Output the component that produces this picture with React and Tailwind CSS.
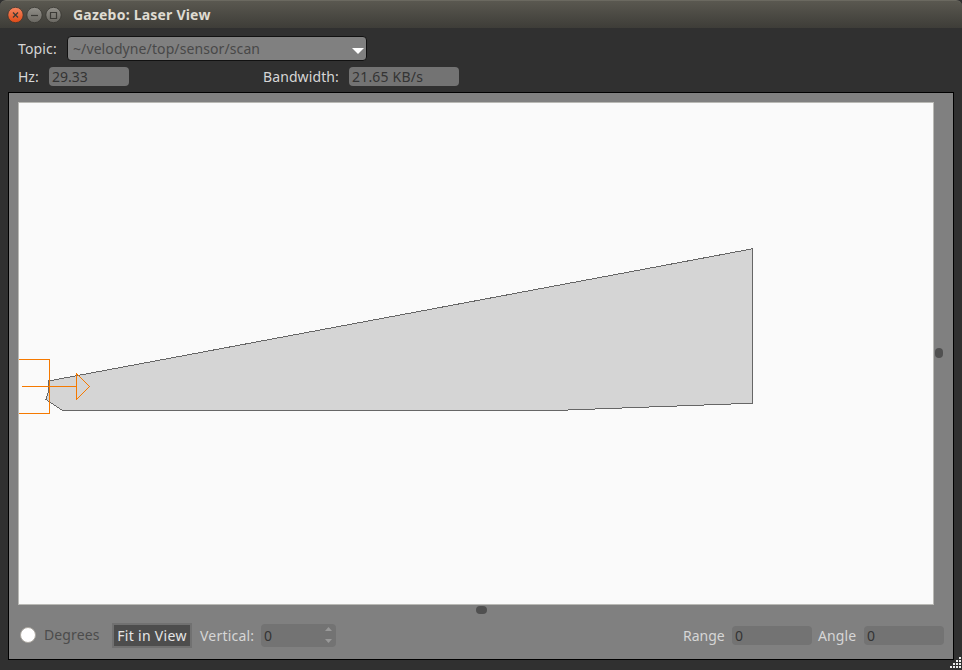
import React from "react";

function TitleBar() {
  return (
    <header className="flex h-7 items-center rounded-t-[6px] border-t border-[#6b6960] bg-linear-to-b from-[#5a5850] to-[#3e3d38] pl-[7px]">
      <svg width="55" height="18" viewBox="0 0 55 18" className="block">
        <defs>
          <linearGradient id="close" x1="0" y1="0" x2="0" y2="1">
            <stop offset="0" stopColor="#f58661" />
            <stop offset="1" stopColor="#df4a16" />
          </linearGradient>
          <linearGradient id="gray" x1="0" y1="0" x2="0" y2="1">
            <stop offset="0" stopColor="#92908a" />
            <stop offset="1" stopColor="#6a6862" />
          </linearGradient>
        </defs>
        <circle cx="8.5" cy="9" r="7.7" fill="url(#close)" stroke="#3a352f" strokeWidth="0.8" />
        <circle cx="27.5" cy="9" r="7.7" fill="url(#gray)" stroke="#363530" strokeWidth="0.8" />
        <circle cx="46.5" cy="9" r="7.7" fill="url(#gray)" stroke="#363530" strokeWidth="0.8" />
        <g fill="none" stroke="#3b3a36" strokeWidth="1.2">
          <path d="M6 6.5l5 5M11 6.5l-5 5" />
          <path d="M24 9.5h7" />
          <path d="M43.5 6.5h6v6h-6z" />
        </g>
      </svg>
      <h1 className="ml-[11px] text-[14px] leading-5 font-bold tracking-[0.21px] whitespace-nowrap text-[#dfdbd2]">Gazebo: Laser View</h1>
    </header>
  );
}

function Field({ className, children }) {
  return (
    <div className={`flex h-[19px] items-center rounded-[4px] bg-[#737373] pl-[3px] text-[#343434] ${className}`}>
      {children}
    </div>
  );
}

function LaserCanvas() {
  return (
    <div className="h-[503px] w-[916px] border border-[#b9b9b5] bg-[#fafafa]">
      <svg width="914" height="501" viewBox="19 103 914 501" className="block" shapeRendering="crispEdges" fill="none">
        <path
          d="M752.5 248.8V403.5H745L554 410.5H62.5L46 399.5L48.5 391L48.5 381Z"
          fill="#d5d5d5"
          stroke="#666666"
        />
        <path d="M19 359.5H49.5V413.5H19M22 386.5H76.5M76.5 373V400M76.5 373.5L89.5 386.5L76.5 399.5" stroke="#f57900" />
      </svg>
    </div>
  );
}

function ResizeGrip() {
  return (
    <svg width="12" height="12" className="block" fill="#ededed" shapeRendering="crispEdges">
      <path d="M9 0h2v2h-2zM6 3h2v2h-2zM9 3h2v2h-2zM3 6h2v2h-2zM6 6h2v2h-2zM9 6h2v2h-2zM0 9h2v2h-2zM3 9h2v2h-2zM6 9h2v2h-2zM9 9h2v2h-2z" />
    </svg>
  );
}

export default function App() {
  return (
    <div className="relative h-[670px] w-[962px] overflow-hidden bg-[#303030] font-['Noto_Sans',sans-serif] text-[14px] leading-[19px] whitespace-nowrap text-[#d6d6d6]">
      <TitleBar />
      <div className="mt-2 flex h-[25px] items-center pl-[18px]">
        <label className="w-[49px] tracking-[0.15px]">Topic:</label>
        <div className="flex h-[25px] w-[300px] items-center justify-between rounded-[4px] border border-[#111] bg-[#808080] pr-[2px] pl-[5px] text-[#484848]">
          <span className="tracking-[0.1px]">~/velodyne/top/sensor/scan</span>
          <svg width="12" height="6" className="mt-1 block">
            <path d="M0 0h12L6 6z" fill="#fff" />
          </svg>
        </div>
      </div>
      <div className="mt-1.5 flex h-[19px] items-center pl-[18px]">
        <label className="w-[31px]">Hz:</label>
        <Field className="w-20">29.33</Field>
        <label className="ml-[134px] w-[86px] tracking-[0.1px]">Bandwidth:</label>
        <Field className="w-[110px] tracking-[0.2px]">21.65 KB/s</Field>
      </div>
      <main className="mt-[6px] ml-2 h-[568px] w-[946px] border border-black bg-[#808080] pt-[9px] pl-[9px]">
        <div className="flex items-center">
          <LaserCanvas />
          <div className="mb-[2px] ml-px h-[10px] w-2 rounded-full bg-[#505050]" />
        </div>
        <div className="mt-px ml-[458px] h-2 w-[11px] rounded-full bg-[#505050]" />
        <div className="mt-[9px] flex h-[25px] items-center">
          <div className="mb-px ml-[2px] h-4 w-4 rounded-full border border-[#aaa69f] bg-white" />
          <label className="mb-[2px] ml-2 w-[68px] tracking-[0.12px] text-[#4c4c4c]">Degrees</label>
          <button className="flex h-[25px] w-20 items-center justify-center border-2 border-[#717171] bg-[#4d4d4d] tracking-[0.3px] text-[#e5e5e5]">
            Fit in View
          </button>
          <label className="ml-2 w-[61px] tracking-[0.2px]">Vertical:</label>
          <div className="flex h-[23px] w-[75px] items-center justify-between rounded-[4px] bg-[#737373] pr-1 pl-[3px] text-[#343434]">
            <span>0</span>
            <svg width="7" height="16" className="mb-[2px] block" fill="#999999">
              <path d="M0 4L3.5 0L7 4zM0 12h7L3.5 16z" />
            </svg>
          </div>
          <label className="ml-[347px] w-[49px]">Range</label>
          <Field className="w-20">0</Field>
          <label className="ml-[6px] w-[46px] tracking-[0.1px]">Angle</label>
          <Field className="w-20">0</Field>
        </div>
      </main>
      <div className="absolute top-[657px] left-[950px]">
        <ResizeGrip />
      </div>
    </div>
  );
}
